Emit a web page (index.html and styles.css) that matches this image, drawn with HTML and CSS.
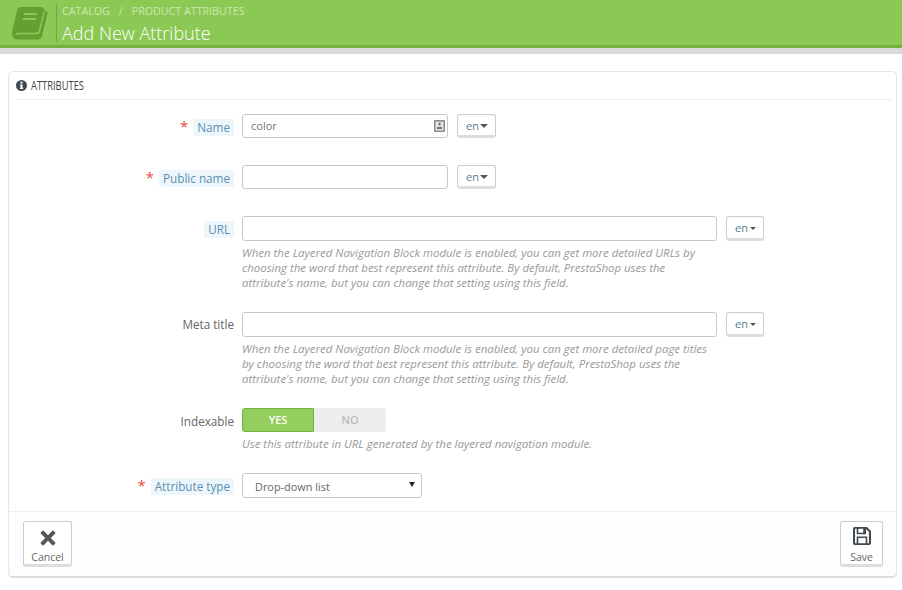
FILE: index.html
```html
<!DOCTYPE html>
<html>
	<head>
		<meta charset="UTF-8">
		<title>Add New Attribute</title>
		<link rel="stylesheet" href="styles.css">
	</head>
	<body>
		<div class="page-head">
			<svg class="head-icon" width="36" height="33" viewBox="0 0 36 33">
				<path fill="#659f33" d="M9 0h20q3.500 0 3 3.500l2 .5q2 .5 1.500 2.500L30 29q-.8 3.500-4 3.500H6q-6 0-6-6 0-2 .5-4L5 4q1-4 4-4z"/>
				<path fill="none" stroke="#8bc954" stroke-width="1.500" d="M32 5l-4.500 19q-.6 2.500-3.500 2.500H7q-3 0-3 1.500"/>
				<path fill="#8bc954" d="M12 6h13v2H12zM11 11h13v2H11z"/>
			</svg>
			<div class="head-text">
				<div class="crumbs"><span>CATALOG</span><span class="sep">/</span><span>PRODUCT ATTRIBUTES</span></div>
				<h1>Add New Attribute</h1>
			</div>
		</div>
		<div class="head-shadow"></div>

		<div class="panel">
			<div class="panel-heading">
				<svg width="11" height="11" viewBox="0 0 11 11"><circle cx="5.500" cy="5.500" r="5.500" fill="#41484f"/><path fill="#fff" d="M4.500 1.800h2v1.700h-2zM3.900 4.500h2.600v3.300h.7v1.300H3.900V7.800h.7V5.700h-.7z"/></svg>
				<span class="heading-text">ATTRIBUTES</span>
			</div>
			<div class="form-body">
				<div class="row row-name">
					<div class="label-col"><span class="req">*</span><span class="hint-label">Name</span></div>
					<div class="field field-short">
						<div class="input">color
							<svg class="card-icon" width="11" height="12" viewBox="0 0 11 12"><rect width="11" height="12" rx="1" fill="#8a8a8a"/><rect x="1.500" y="1.500" width="8" height="9" fill="#e4e4e4"/><path fill="#777" d="M4.500 2.500h2v3h-2zM3 7h5v2H3z"/></svg>
						</div>
					</div>
					<div class="lang">en<i></i></div>
				</div>
				<div class="row row-public">
					<div class="label-col"><span class="req">*</span><span class="hint-label">Public name</span></div>
					<div class="field field-short"><div class="input"></div></div>
					<div class="lang">en<i></i></div>
				</div>
				<div class="row row-url">
					<div class="label-col"><span class="hint-label">URL</span></div>
					<div class="field field-long">
						<div class="input"></div>
						<p class="help">When the Layered Navigation Block module is enabled, you can get more detailed URLs by choosing the word that best represent this attribute. By default, PrestaShop uses the attribute's name, but you can change that setting using this field.</p>
					</div>
					<div class="lang lang-wide">en<i></i></div>
				</div>
				<div class="row row-meta">
					<div class="label-col"><span class="plain-label">Meta title</span></div>
					<div class="field field-long">
						<div class="input"></div>
						<p class="help">When the Layered Navigation Block module is enabled, you can get more detailed page titles by choosing the word that best represent this attribute. By default, PrestaShop uses the attribute's name, but you can change that setting using this field.</p>
					</div>
					<div class="lang lang-wide">en<i></i></div>
				</div>
				<div class="row row-index">
					<div class="label-col"><span class="plain-label plain-low">Indexable</span></div>
					<div class="field field-long">
						<div class="switch"><span class="on">YES</span><span class="off">NO</span></div>
						<p class="help">Use this attribute in URL generated by the layered navigation module.</p>
					</div>
				</div>
				<div class="row row-type">
					<div class="label-col"><span class="req">*</span><span class="hint-label">Attribute type</span></div>
					<div class="select">Drop-down list<i></i></div>
				</div>
			</div>
			<div class="panel-footer">
				<div class="tool-btn btn-cancel">
					<svg width="20" height="20" viewBox="0 0 20 20"><path fill="#555" d="M4.500 1 10 6.500 15.500 1q.8-.7 1.500 0L19 3q.7.7 0 1.500L13.500 10l5.500 5.500q.7.800 0 1.500l-2 2q-.7.700-1.500 0L10 13.500 4.500 19q-.8.700-1.500 0l-2-2q-.7-.7 0-1.500L6.500 10 1 4.500Q.3 3.700 1 3l2-2q.7-.7 1.500 0z"/></svg>
					<span>Cancel</span>
				</div>
				<div class="tool-btn btn-save">
					<svg width="22" height="22" viewBox="0 0 22 22"><path fill="#41484f" fill-rule="evenodd" d="M2 0h15l5 5v15q0 2-2 2H2q-2 0-2-2V2q0-2 2-2zm.500 2v18h2v-8.500h13V20h2V6l-3.500-3.500V9H4.500V2zm4 0v5h6V2zm-.000 11.500V20h9v-6.500z"/></svg>
					<span>Save</span>
				</div>
			</div>
		</div>
	</body>
</html>
```

FILE: styles.css
```css
body {
	margin: 0;
	padding: 0;
	background: #fff;
	color: #666;
	font-family: "Open Sans", "Liberation Sans", sans-serif;
	font-size: 11px;
}

.page-head {
	display: flex;
	height: 45px;
	background: #8bc954;
	border-bottom: 3px solid #72b13b;
	overflow: hidden;
}

.head-icon {
	flex: none;
	margin: 7px 8px 0 12px;
}

.head-text {
	margin: 4px 0 3px 0;
	padding: 0 0 0 5px;
	border-left: 1px solid #72a544;
}

.crumbs {
	height: 14px;
	color: #cbe7b2;
	font-size: 10.7px;
	line-height: 14px;
}

.crumbs .sep {
	margin: 0 9px;
}

h1 {
	margin: 3px 0 0;
	color: #fff;
	font-size: 18px;
	font-weight: 300;
	line-height: 24px;
}

.head-shadow {
	height: 6px;
	background: #d9d9d9;
}

.panel {
	width: 887px;
	height: 504px;
	margin: 17px 0 0 8px;
	border: 1px solid #e6e6e6;
	border-bottom: 2px solid #dcdcdc;
	border-radius: 5px;
	display: flex;
	flex-direction: column;
}

.panel-heading {
	display: flex;
	align-items: center;
	gap: 4px;
	height: 27px;
	margin: 0 4px 0 7px;
	border-bottom: 1px solid #eee;
	color: #444;
}

.heading-text {
	font-size: 12px;
	transform: scaleX(0.78);
	transform-origin: left center;
}

.form-body {
	flex: 1;
}

.row {
	display: flex;
	align-items: flex-start;
}

.row-name { margin-top: 14px; }
.row-public { margin-top: 26px; }
.row-url { margin-top: 26px; }
.row-meta { margin-top: 22px; }
.row-index { margin-top: 22px; }
.row-type { margin-top: 22px; }

.label-col {
	display: flex;
	justify-content: flex-end;
	align-items: center;
	gap: 5px;
	width: 225px;
	height: 25px;
	margin-right: 8px;
	flex: none;
}

.req {
	color: #e74c3c;
	font-size: 15px;
	line-height: 15px;
}

.hint-label {
	margin-top: 2px;
	padding: 0 4px;
	background: #edf6fb;
	border-radius: 2px;
	color: #5a8fb4;
	font-size: 11.7px;
	line-height: 17px;
}

.plain-label {
	color: #666;
	font-size: 11.7px;
	line-height: 17px;
}

.plain-low {
	margin-top: 2px;
}

.field-short {
	width: 206px;
}

.field-long {
	width: 475px;
}

.input {
	position: relative;
	box-sizing: border-box;
	height: 24px;
	padding: 0 8px;
	border: 1px solid #c7c7c7;
	border-radius: 3px;
	background: #fff;
	color: #777;
	font-size: 11px;
	line-height: 22px;
}

.row-url .input,
.row-meta .input {
	height: 25px;
}

.card-icon {
	position: absolute;
	right: 2px;
	top: 5px;
}

.lang {
	box-sizing: border-box;
	height: 24px;
	margin-left: 9px;
	padding: 0 7px 0 8px;
	border: 1px solid #ccc;
	border-bottom: 3px solid #ddd;
	border-radius: 3px;
	background: #fff;
	color: #5a7a91;
	font-size: 11px;
	line-height: 21px;
	white-space: nowrap;
}

.lang i {
	display: inline-block;
	margin-left: 1px;
	vertical-align: 2px;
	border-top: 4px solid #555;
	border-left: 4px solid transparent;
	border-right: 4px solid transparent;
}

.lang-wide {
	height: 25px;
	line-height: 22px;
}

.lang-wide i {
	border-width: 3px 3px 0;
	margin-left: 2px;
}

.help {
	margin: 4px 0 0;
	color: #999;
	font-size: 11.45px;
	font-style: italic;
	line-height: 15px;
}

.switch {
	display: flex;
	width: 144px;
	height: 24px;
	text-align: center;
	font-size: 11px;
	font-weight: 600;
	line-height: 24px;
}

.switch span {
	flex: 1;
}

.switch .on {
	flex: none;
	box-sizing: border-box;
	width: 72px;
	border: 1px solid #72b13b;
	border-radius: 3px 0 0 3px;
	background: #93ce5f;
	color: #fff;
	line-height: 22px;
}

.switch .off {
	border-radius: 0 3px 3px 0;
	background: #eee;
	color: #bbb;
}

.select {
	position: relative;
	box-sizing: border-box;
	width: 180px;
	height: 25px;
	padding: 0 12px;
	border: 1px solid #c7c7c7;
	border-radius: 3px;
	color: #666;
	font-size: 10.9px;
	line-height: 25px;
}

.select i {
	position: absolute;
	right: 6px;
	top: 8px;
	border-top: 5px solid #222;
	border-left: 3.5px solid transparent;
	border-right: 3.5px solid transparent;
}

.panel-footer {
	display: flex;
	justify-content: space-between;
	box-sizing: border-box;
	height: 65px;
	padding: 9px 13px 0 14px;
	border-top: 1px solid #eee;
	background: #fcfdfe;
	border-radius: 0 0 5px 5px;
}

.tool-btn {
	display: flex;
	flex-direction: column;
	align-items: center;
	box-sizing: border-box;
	height: 46px;
	border: 1px solid #ccc;
	border-bottom: 3px solid #ddd;
	border-radius: 3px;
	background: #fff;
	color: #666;
	font-size: 10.5px;
	line-height: 14px;
}

.btn-cancel {
	width: 49px;
	padding-top: 8px;
}

.btn-cancel span {
	margin-top: 4px;
}

.btn-save {
	width: 43px;
	padding-top: 5px;
}

.btn-save span {
	margin-top: 5px;
}
```
